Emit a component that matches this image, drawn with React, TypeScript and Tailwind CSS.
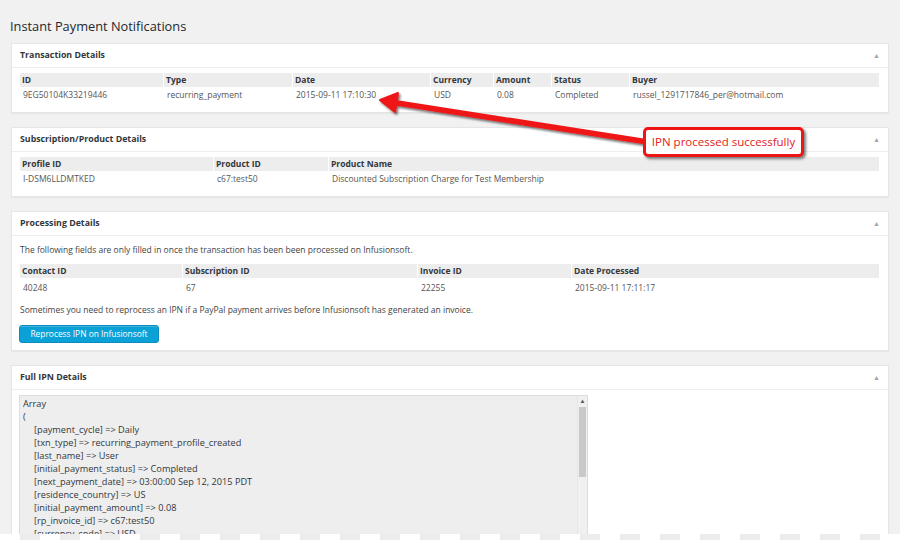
import React from "react";

const font = { fontFamily: '"Open Sans", "Liberation Sans", sans-serif' };

const Toggle = () => (
  <span className="text-[7px] leading-none text-[#a0a5aa]">▲</span>
);

const Panel = ({
  title,
  children,
}: {
  title: string;
  children: React.ReactNode;
}) => (
  <div className="bg-white border border-[#e5e5e5] shadow-[0_1px_1px_rgba(0,0,0,0.04)]">
    <div className="h-6 flex items-center justify-between px-2 border-b border-[#eeeeee]">
      <h2 className="text-[8.8px] font-bold text-[#32373c]">{title}</h2>
      <Toggle />
    </div>
    <div className="px-2 pt-[5px]">{children}</div>
  </div>
);

const Table = ({
  cols,
  heads,
  values,
  rowClass = "h-4",
}: {
  cols: string;
  heads: string[];
  values: string[];
  rowClass?: string;
}) => (
  <div className={`grid ${cols} gap-x-px text-[8.5px]`}>
    {heads.map((h) => (
      <div
        key={h}
        className="bg-[#ededed] h-[14px] flex items-center pl-[2px] font-bold text-[#32373c]"
      >
        {h}
      </div>
    ))}
    {values.map((v, i) => (
      <div
        key={i}
        className={`${rowClass} flex items-center pl-[3px] text-[#555] whitespace-nowrap`}
      >
        {v}
      </div>
    ))}
  </div>
);

const ipnLines = [
  "[payment_cycle] => Daily",
  "[txn_type] => recurring_payment_profile_created",
  "[last_name] => User",
  "[initial_payment_status] => Completed",
  "[next_payment_date] => 03:00:00 Sep 12, 2015 PDT",
  "[residence_country] => US",
  "[initial_payment_amount] => 0.08",
  "[rp_invoice_id] => c67:test50",
  "[currency_code] => USD",
];

export default function App() {
  return (
    <div
      className="relative w-[900px] h-[540px] overflow-hidden bg-[#f1f1f1] text-[#444]"
      style={font}
    >
      <div className="pl-[11px] pr-[11px]">
        <h1 className="pt-[16px] pb-[7px] -ml-px text-[12.8px] leading-5 text-[#23282d]">
          Instant Payment Notifications
        </h1>

        <div className="flex flex-col gap-[14px]">
          <Panel title="Transaction Details">
            <div className="pb-[9px] pr-px">
              <Table
                cols="grid-cols-[143px_128px_137px_62px_57px_77px_1fr]"
                heads={[
                  "ID",
                  "Type",
                  "Date",
                  "Currency",
                  "Amount",
                  "Status",
                  "Buyer",
                ]}
                values={[
                  "9EG50104K33219446",
                  "recurring_payment",
                  "2015-09-11 17:10:30",
                  "USD",
                  "0.08",
                  "Completed",
                  "russel_1291717846_per@hotmail.com",
                ]}
              />
            </div>
          </Panel>

          <Panel title="Subscription/Product Details">
            <div className="pb-[9px] pr-px">
              <Table
                cols="grid-cols-[193px_114px_1fr]"
                heads={["Profile ID", "Product ID", "Product Name"]}
                values={[
                  "I-DSM6LLDMTKED",
                  "c67:test50",
                  "Discounted Subscription Charge for Test Membership",
                ]}
              />
            </div>
          </Panel>

          <Panel title="Processing Details">
            <div className="pr-px pb-[7px]">
              <p className="text-[8.5px] text-[#444] h-[14px] flex items-center mt-[2px] mb-[7px]">
                The following fields are only filled in once the transaction has
                been been processed on Infusionsoft.
              </p>
              <Table
                cols="grid-cols-[162px_234px_153px_1fr]"
                heads={[
                  "Contact ID",
                  "Subscription ID",
                  "Invoice ID",
                  "Date Processed",
                ]}
                values={["40248", "67", "22255", "2015-09-11 17:11:17"]}
                rowClass="h-5"
              />
              <p className="text-[8.5px] text-[#444] h-[14px] flex items-center mt-[5px]">
                Sometimes you need to reprocess an IPN if a PayPal payment arrives
                before Infusionsoft has generated an invoice.
              </p>
              <button className="mt-[8px] -ml-px w-[140px] h-[18px] rounded-[3px] bg-[#0aa1d6] border border-[#0a8cc0] text-white text-[8.4px] flex items-center justify-center shadow-[inset_0_1px_0_rgba(120,200,230,0.5)]">
                Reprocess IPN on Infusionsoft
              </button>
            </div>
          </Panel>

          <Panel title="Full IPN Details">
            <div className="flex w-[569px] h-[160px] -ml-px border border-[#dddddd] bg-[#eeeeee]">
              <div className="flex-1 pl-[3px] pt-[1px] text-[9.2px] leading-[13px] text-[#32373c] whitespace-pre">
                <div>Array</div>
                <div>(</div>
                {ipnLines.map((l) => (
                  <div key={l} className="pl-[11px]">
                    {l}
                  </div>
                ))}
              </div>
              <div className="w-[10px] flex flex-col bg-[#f0f0f0] border-l border-[#e6e6e6]">
                <div className="h-[11px] flex items-center justify-center text-[6px] text-[#555]">
                  ▲
                </div>
                <div className="h-[70px] bg-[#c9c9c9] mx-px" />
              </div>
            </div>
          </Panel>
        </div>
      </div>

      {/* annotation arrow */}
      <svg
        className="absolute left-0 top-0 pointer-events-none"
        width="900"
        height="540"
      >
        <defs>
          <filter id="sh" x="-10%" y="-50%" width="120%" height="200%">
            <feDropShadow dx="1.5" dy="2" stdDeviation="1.2" floodColor="#000" floodOpacity="0.55" />
          </filter>
        </defs>
        <g filter="url(#sh)">
          <line
            x1="394"
            y1="102.5"
            x2="648"
            y2="142"
            stroke="#ee1515"
            strokeWidth="5.5"
            strokeLinecap="round"
          />
          <polygon points="380,100 398,93 395,112" fill="#ee1515" stroke="#ee1515" strokeWidth="2" strokeLinejoin="round" />
        </g>
      </svg>

      <div className="absolute left-[643px] top-[127px] w-[161px] h-[30px] bg-white border-[3px] border-[#ee1515] rounded-[5px] shadow-[2px_2px_3px_rgba(0,0,0,0.5)] flex items-center justify-center">
        <span className="text-[11.5px] text-[#e32020]">
          IPN processed successfully
        </span>
      </div>

      {/* bottom watermark strip */}
      <div className="absolute left-0 bottom-0 w-[900px] h-[6px] flex">
        {Array.from({ length: 23 }).map((_, i) => (
          <div key={i} className="flex">
            <div className="w-5 h-full bg-white" />
            <div className="w-5 h-full bg-[#ececec]" />
          </div>
        ))}
      </div>
    </div>
  );
}
